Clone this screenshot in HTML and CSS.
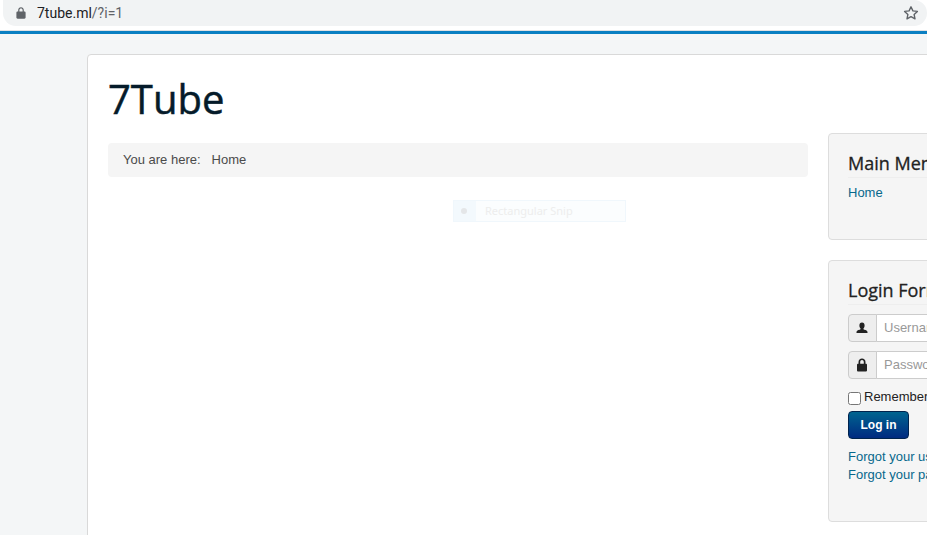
FILE: index.html
```html
<!DOCTYPE html>
<html lang="en">
<head>
<meta charset="utf-8">
<title>7Tube</title>
<link rel="stylesheet" href="styles.css">
</head>
<body>
<header class="chrome">
  <div class="omnibox">
    <svg class="lock-icon" width="10" height="12" viewBox="0 0 10 12"><path fill="#5f6368" d="M2.2 4.4V3.1C2.2 1.4 3.4.2 5 .2s2.8 1.2 2.8 2.9v1.300h.6c.7 0 1.200.5 1.200 1.200v5c0 .7-.5 1.200-1.200 1.200H1.600C.9 11.800.4 11.300.4 10.600v-5c0-.7.5-1.200 1.200-1.200zm1.200 0h3.200V3.100C6.600 2.100 5.900 1.400 5 1.400s-1.600.7-1.600 1.700z"/></svg>
    <div class="url"><span class="host">7tube.ml</span><span class="path">/?i=1</span></div>
    <svg class="star-icon" width="16" height="16" viewBox="0 0 16 16"><path fill="none" stroke="#5f6368" stroke-width="1.400" stroke-linejoin="round" d="M8 1.800l1.900 4.100 4.500.5-3.300 3 .9 4.400L8 11.600l-4 2.200.9-4.400-3.300-3 4.500-.5z"/></svg>
  </div>
</header>
<div class="accent"></div>
<div class="page">
  <div class="card">
    <h1 class="brand">7Tube</h1>
    <div class="columns">
      <main class="main">
        <div class="breadcrumb"><span>You are here:</span><span>Home</span></div>
      </main>
      <aside class="side">
        <section class="well well-menu">
          <h3 class="well-title">Main Menu</h3>
          <a class="link" href="#">Home</a>
        </section>
        <section class="well well-login">
          <h3 class="well-title">Login Form</h3>
          <div class="field">
            <span class="addon"><svg width="12" height="12" viewBox="0 0 12 12"><path fill="#222" d="M6 .4c1.700 0 2.600 1.200 2.600 3 0 1.300-.5 2.400-1.200 3 .1.800.4 1.100 1.200 1.400 1.300.5 2.600.9 2.900 2.100v1H.5v-1c.3-1.200 1.600-1.600 2.900-2.100.8-.3 1.100-.6 1.200-1.400-.7-.6-1.200-1.700-1.200-3 0-1.800.9-3 2.600-3z"/></svg></span>
            <input class="input" type="text" placeholder="Username">
          </div>
          <div class="field">
            <span class="addon"><svg width="12" height="14" viewBox="0 0 12 14"><path fill="#222" d="M2.500 5.800V4C2.500 1.900 4 .5 6 .5S9.500 1.900 9.500 4v1.800h.6c.5 0 .9.4.9.9v5.900c0 .5-.4.9-.9.900H1.900c-.5 0-.9-.4-.9-.9V6.700c0-.5.4-.9.9-.9zm1.700 0h3.600V4c0-1.100-.8-1.900-1.800-1.900S4.200 2.900 4.200 4z"/></svg></span>
            <input class="input" type="password" placeholder="Password">
          </div>
          <label class="remember"><input class="check" type="checkbox"><span>Remember Me</span></label>
          <button class="btn" type="button">Log in</button>
          <a class="link link-row" href="#">Forgot your username?</a>
          <a class="link link-row" href="#">Forgot your password?</a>
        </section>
      </aside>
    </div>
    <div class="snip"><span class="snip-icon"><i></i></span><span class="snip-label">Rectangular Snip</span></div>
  </div>
</div>
</body>
</html>
```
FILE: styles.css
```css
* { box-sizing: border-box; }
html, body { margin: 0; height: 100%; }
body {
  width: 927px;
  height: 535px;
  overflow: hidden;
  background: #f4f6f7;
  font-family: "Liberation Sans", Arial, sans-serif;
  font-size: 13px;
  line-height: 18px;
  color: #333;
}
.chrome { height: 31px; background: #fff; padding: 0 0 4px 3px; border-bottom: 1px solid #dfe1e3; }
.omnibox {
  height: 26px;
  background: #f1f3f4;
  border-radius: 0 13px 13px 13px;
  display: flex;
  align-items: center;
  padding: 0 8px 1px 13px;
}
.lock-icon { flex: none; }
.url { margin-left: 11px; font-family: "Roboto", "Liberation Sans", sans-serif; font-size: 14px; flex: 1; }
.host { color: #202124; }
.path { color: #5f6368; }
.star-icon { flex: none; }
.accent { height: 3px; background: #0a7fc2; }
.page { padding: 20px 0 0 87px; }
.card {
  position: relative;
  width: 1000px;
  height: 600px;
  background: #fff;
  border: 1px solid #d9d9d9;
  border-radius: 4px;
  padding: 20px;
}
.brand {
  margin: 0 0 10px;
  font-family: "Open Sans", sans-serif;
  font-weight: 400;
  font-size: 40px;
  line-height: 48px;
  color: #051b2a;
  -webkit-text-stroke: 0.5px #051b2a;
}
.columns { display: flex; gap: 20px; align-items: flex-start; }
.main { width: 700px; flex: none; padding-top: 10px; }
.breadcrumb {
  height: 34px;
  background: #f5f5f5;
  border-radius: 4px;
  display: flex;
  align-items: center;
  gap: 11px;
  padding: 0 15px;
  color: #4a4a4a;
}
.side { width: 250px; flex: none; display: flex; flex-direction: column; gap: 20px; }
.well {
  background: #f5f5f5;
  border: 1px solid #ddd;
  border-radius: 4px;
  padding: 19px;
}
.well-menu { height: 107px; }
.well-login { height: 262px; }
.well-title {
  margin: 0 0 6px;
  padding-bottom: 4px;
  border-bottom: 1px solid #eee;
  font-family: "Open Sans", sans-serif;
  font-weight: 400;
  font-size: 18px;
  line-height: 20px;
  color: #222;
  -webkit-text-stroke: 0.3px #222;
  white-space: nowrap;
}
.link { display: block; color: #08688c; text-decoration: none; }
.field { display: flex; height: 28px; margin-bottom: 9px; }
.well-login .well-title { margin-bottom: 9px; }
.addon {
  width: 29px;
  flex: none;
  background: #eee;
  border: 1px solid #ccc;
  border-radius: 4px 0 0 4px;
  padding-right: 2px;
  display: flex;
  align-items: center;
  justify-content: center;
}
.input {
  width: 160px;
  flex: none;
  margin-left: -1px;
  border: 1px solid #ccc;
  border-radius: 0 4px 4px 0;
  background: #fff;
  padding: 0 7px 2px;
  font-family: "Liberation Sans", sans-serif;
  font-size: 13px;
}
.input::placeholder { color: #999; opacity: 1; }
.remember { display: flex; align-items: flex-start; gap: 3px; color: #222; white-space: nowrap; height: 23px; }
.check { margin: 4px 0 0; width: 13px; height: 13px; }
.btn {
  display: block;
  width: 61px;
  height: 28px;
  padding: 0;
  border: 1px solid #00234d;
  border-radius: 4px;
  background: linear-gradient(#006490, #002a80);
  color: #fff;
  font-family: "Liberation Sans", sans-serif;
  font-size: 12px;
  font-weight: 700;
  margin: 0 0 9px;
}
.link-row { white-space: nowrap; }
.snip {
  position: absolute;
  left: 365px;
  top: 145px;
  width: 173px;
  height: 22px;
  display: flex;
  background: #fbfdfe;
  border: 1px solid #f0f7fc;
  font-family: "Noto Sans", sans-serif;
  font-size: 11px;
  line-height: 20px;
  color: #ededed;
}
.snip-icon {
  width: 22px;
  background: #f3f9fd;
  padding-right: 2px;
  display: flex;
  align-items: center;
  justify-content: center;
}
.snip-icon i { width: 6px; height: 6px; border-radius: 50%; background: #e4e6e8; }
.snip-label { margin-left: 9px; }
```
